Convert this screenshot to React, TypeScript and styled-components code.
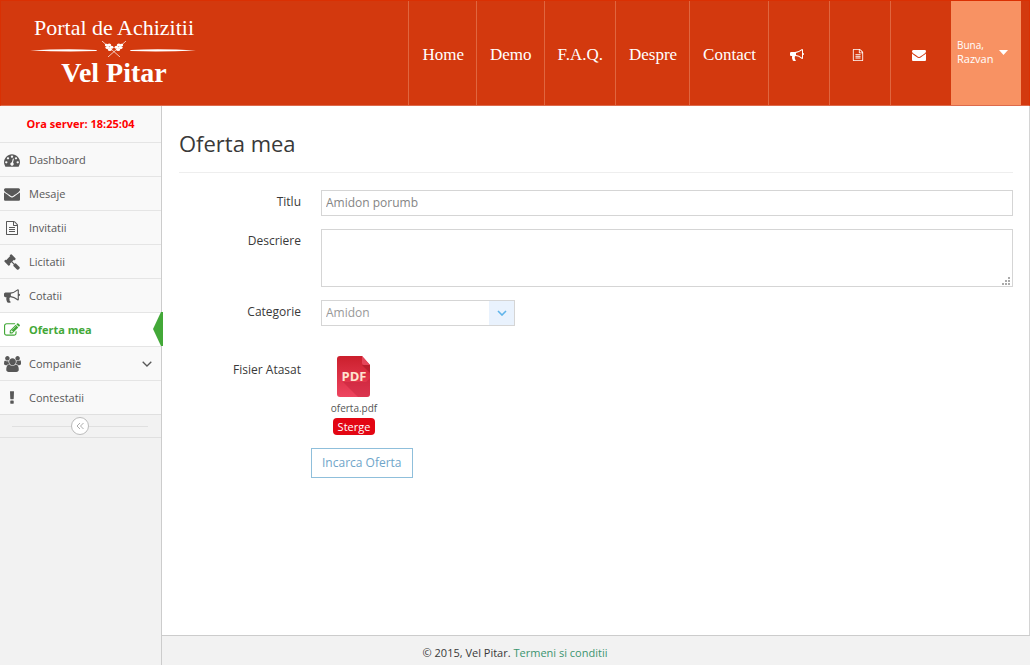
import React from "react";
import styled, { createGlobalStyle, css } from "styled-components";

const GlobalStyle = createGlobalStyle`
  * { box-sizing: border-box; }
  body {
    margin: 0;
    background: #fff;
    color: #393939;
    font-family: "Open Sans", "Noto Sans", sans-serif;
    font-size: 12px;
    line-height: 20px;
  }
  button, input, select, textarea { font: inherit; margin: 0; }
  a { text-decoration: none; }
`;

const icons = {
  envelope: {
    width: 1792,
    d: "M1792 710v794q0 66-47 113t-113 47h-1472q-66 0-113-47t-47-113v-794q44 49 101 87 362 246 497 345 57 42 92.5 65.5t94.5 48 110 24.5h2q51 0 110-24.5t94.5-48 92.5-65.5q170-123 498-345 57-39 100-87zm0-294q0 79-49 151t-122 123q-376 261-468 325-10 7-42.5 31t-54 38.5-52 32.5-57.5 27-50 9h-2q-23 0-50-9t-57.5-27-52-32.5-54-38.5-42.5-31q-91-64-262-182.5t-205-142.5q-62-42-117-115.5t-55-136.5q0-78 41.5-130t118.5-52h1472q65 0 112.5 47t47.5 113z",
  },
  file: {
    width: 1792,
    d: "M1596 380q28 28 48 76t20 88v1152q0 40-28 68t-68 28h-1344q-40 0-68-28t-28-68v-1600q0-40 28-68t68-28h896q40 0 88 20t76 48zm-444-244v376h376q-10-29-22-41l-313-313q-12-12-41-22zm384 1528v-1024h-416q-40 0-68-28t-28-68v-416h-768v1536h1280zm-1024-864q0-14 9-23t23-9h704q14 0 23 9t9 23v64q0 14-9 23t-23 9h-704q-14 0-23-9t-9-23v-64zm736 224q14 0 23 9t9 23v64q0 14-9 23t-23 9h-704q-14 0-23-9t-9-23v-64q0-14 9-23t23-9h704zm0 256q14 0 23 9t9 23v64q0 14-9 23t-23 9h-704q-14 0-23-9t-9-23v-64q0-14 9-23t23-9h704z",
  },
  bullhorn: {
    width: 1792,
    d: "M1664 640q53 0 90.5 37.5t37.5 90.5-37.5 90.5-90.5 37.5v384q0 52-38 90t-90 38q-417-347-812-380-58 19-91 66t-31 100.5 40 92.5q-20 33-23 65.5t6 58 33.5 55 48 50 61.5 50.5q-29 58-111.5 83t-168.5 11.5-132-55.5q-7-23-29.5-87.5t-32-94.5-23-89-15-101 3.5-98.5 22-110.5h-122q-66 0-113-47t-47-113v-192q0-66 47-113t113-47h480q435 0 896-384 52 0 90 38t38 90v384zm-128 604v-954q-394 302-768 343v270q377 42 768 341z",
  },
  gauge: {
    width: 1792,
    d: "M384 1152q0-53-37.5-90.5t-90.5-37.5-90.5 37.5-37.5 90.5 37.5 90.5 90.5 37.5 90.5-37.5 37.5-90.5zm192-448q0-53-37.5-90.5t-90.5-37.5-90.5 37.5-37.5 90.5 37.5 90.5 90.5 37.5 90.5-37.5 37.5-90.5zm428 481l101-382q6-26-7.5-48.5t-38.5-29.5-48 6.5-30 39.5l-101 382q-60 5-107 43.5t-63 98.5q-20 77 20 146t117 89 146-20 89-117q16-60-6-117t-72-91zm660-33q0-53-37.5-90.5t-90.5-37.5-90.5 37.5-37.5 90.5 37.5 90.5 90.5 37.5 90.5-37.5 37.5-90.5zm-640-640q0-53-37.5-90.5t-90.5-37.5-90.5 37.5-37.5 90.5 37.5 90.5 90.5 37.5 90.5-37.5 37.5-90.5zm448 192q0-53-37.5-90.5t-90.5-37.5-90.5 37.5-37.5 90.5 37.5 90.5 90.5 37.5 90.5-37.5 37.5-90.5zm320 448q0 261-141 483-19 29-54 29h-1402q-35 0-54-29-141-221-141-483 0-182 71-348t191-286 286-191 348-71 348 71 286 191 191 286 71 348z",
  },
  gavel: {
    width: 1792,
    d: "M1771 1536q0 53-37 90l-107 108q-39 37-91 37-53 0-90-37l-363-364q-38-36-38-90 0-53 43-96l-256-256-126 126q-14 14-34 14t-34-14q2 2 12.5 12t12.5 13 10 11.5 10 13.5 6 13.5 5.5 16.5 1.5 18q0 38-28 68-3 3-16.5 18t-19 20.5-18.5 16.5-22 15.5-22 9-26 4.5q-40 0-68-28l-408-408q-28-28-28-68 0-13 4.5-26t9-22 15.5-22 16.5-18.5 20.5-19 18-16.5q30-28 68-28 10 0 18 1.5t16.5 5.5 13.5 6 13.5 10 11.5 10 13 12.5 12 12.5q-14-14-14-34t14-34l348-348q14-14 34-14t34 14q-2-2-12.5-12t-12.5-13-10-11.5-10-13.5-6-13.5-5.5-16.5-1.5-18q0-38 28-68 3-3 16.5-18t19-20.5 18.5-16.5 22-15.5 22-9 26-4.5q40 0 68 28l408 408q28 28 28 68 0 13-4.5 26t-9 22-15.5 22-16.5 18.5-20.5 19-18 16.5q-30 28-68 28-10 0-18-1.5t-16.5-5.5-13.5-6-13.5-10-11.5-10-13-12.5-12-12.5q14 14 14 34t-14 34l-126 126 256 256q43-43 96-43 52 0 91 37l363 363q37 39 37 91z",
  },
  edit: {
    width: 1792,
    d: "M888 1184l116-116-152-152-116 116v56h96v96h56zm440-720q-16-16-33 1l-350 350q-17 17-1 33t33-1l350-350q17-17 1-33zm80 594v190q0 119-84.5 203.5t-203.5 84.5h-832q-119 0-203.5-84.5t-84.5-203.5v-832q0-119 84.5-203.5t203.5-84.5h832q63 0 117 25 15 7 18 23 3 17-9 29l-49 49q-14 14-32 8-23-6-45-6h-832q-66 0-113 47t-47 113v832q0 66 47 113t113 47h832q66 0 113-47t47-113v-126q0-13 9-22l64-64q15-15 35-7t20 29zm-96-738l288 288-672 672h-288v-288zm444 132l-92 92-288-288 92-92q28-28 68-28t68 28l152 152q28 28 28 68t-28 68z",
  },
  users: {
    width: 1920,
    d: "M593 896q-162 5-265 128h-134q-82 0-138-40.5t-56-118.5q0-353 124-353 6 0 43.5 21t97.5 42.5 119 21.5q67 0 133-23-5 37-5 66 0 159 93 293zm1071 637q0 120-73 189.5t-194 69.5h-874q-121 0-194-69.5t-73-189.5q0-53 3.5-103.5t14-109 26.5-108.5 43-97.5 62-81 85.5-53.5 111.5-20q10 0 43 21.5t73 48 107 48 135 21.5 135-21.5 107-48 73-48 43-21.5q61 0 111.5 20t85.5 53.5 62 81 43 97.5 26.5 108.5 14 109 3.5 103.5zm-1024-1277q0 106-75 181t-181 75-181-75-75-181 75-181 181-75 181 75 75 181zm704 384q0 159-112.5 271.5t-271.5 112.5-271.5-112.5-112.5-271.5 112.5-271.5 271.5-112.5 271.5 112.5 112.5 271.5zm576 225q0 78-56 118.5t-138 40.5h-134q-103-123-265-128 93-134 93-293 0-29-5-66 66 23 133 23 59 0 119-21.5t97.5-42.5 43.5-21q124 0 124 353zm-128-609q0 106-75 181t-181 75-181-75-75-181 75-181 181-75 181 75 75 181z",
  },
  exclamation: {
    width: 1792,
    d: "M1088 1248v224q0 26-19 45t-45 19h-256q-26 0-45-19t-19-45v-224q0-26 19-45t45-19h256q26 0 45 19t19 45zm30-1056l-28 768q-1 26-20.5 45t-45.5 19h-256q-26 0-45.5-19t-20.5-45l-28-768q-1-26 17.5-45t44.5-19h320q26 0 44.5 19t17.5 45z",
  },
};

type IconName = keyof typeof icons;

function Icon({ name, size }: { name: IconName; size: number }) {
  const icon = icons[name];
  return (
    <svg
      height={size}
      width={Math.round((size * icon.width) / 1792)}
      viewBox={`0 0 ${icon.width} 1792`}
      fill="currentColor"
      aria-hidden="true"
    >
      <path d={icon.d} />
    </svg>
  );
}

const Page = styled.div`
  display: flex;
  flex-direction: column;
  min-height: 100vh;
`;

const Header = styled.header`
  display: flex;
  justify-content: space-between;
  height: 106px;
  padding-right: 8px;
  background: #d3390e;
  border: 1px solid #da3003;
  border-bottom-color: #dd6a4b;
`;

const Brand = styled.a`
  display: flex;
  flex-direction: column;
  align-items: center;
  width: 168px;
  margin-left: 29px;
  padding-top: 14px;
  color: #fff;
  font-family: "Liberation Serif", serif;
  white-space: nowrap;
`;

const BrandTop = styled.span`
  font-size: 22px;
  line-height: 26px;
`;

const BrandName = styled.span`
  font-size: 28px;
  font-weight: 700;
  line-height: 32px;
`;

const BrandRule = styled.svg`
  display: block;
`;

const TopNav = styled.nav`
  display: flex;
`;

const navCell = css`
  display: flex;
  align-items: center;
  justify-content: center;
  border-left: 1px solid #e0663f;
  color: #fff;
`;

const NavLink = styled.a`
  ${navCell}
  padding: 4px 12px 0 13px;
  font-family: "Liberation Serif", serif;
  font-size: 17px;
`;

const NavIcon = styled.a`
  ${navCell}
  width: 61px;
  padding: 4px 4px 0 0;
`;

const UserButton = styled.button`
  display: flex;
  align-items: center;
  gap: 6px;
  width: 70px;
  padding: 0 0 2px 6px;
  border: 0;
  background: #f89263;
  color: #fff;
  font-size: 11px;
  line-height: 13px;
  text-align: left;
`;

const Greeting = styled.small`
  display: block;
  font-size: 10px;
`;

const Body = styled.div`
  display: flex;
  flex: 1;
`;

const Sidebar = styled.aside`
  flex: none;
  width: 162px;
  background: #f2f2f2;
  border-right: 1px solid #ccc;
`;

const ServerTime = styled.div`
  padding: 8px 0;
  background: #f9f9f9;
  color: #f00;
  font-size: 11px;
  font-weight: 700;
  text-align: center;
`;

const Menu = styled.ul`
  margin: 0;
  padding: 0;
  list-style: none;
`;

const MenuLink = styled.a<{ $active?: boolean }>`
  position: relative;
  display: grid;
  grid-template-columns: 24px 1fr auto;
  align-items: center;
  gap: 5px;
  height: 34px;
  padding-right: 9px;
  border-top: 1px solid #e5e5e5;
  background: ${(p) => (p.$active ? "#fff" : "#f9f9f9")};
  color: ${(p) => (p.$active ? "#43a838" : "#585858")};
  font-size: 11px;
  font-weight: ${(p) => (p.$active ? 700 : 400)};
`;

const MenuIcon = styled.span`
  display: flex;
  justify-content: center;
`;

const ActiveMark = styled.svg`
  position: absolute;
  top: -1px;
  right: -2px;
`;

const CollapseBar = styled.div`
  display: flex;
  align-items: center;
  height: 24px;
  padding: 0 13px 0 12px;
  border-top: 1px solid #e0e0e0;
  border-bottom: 1px solid #e0e0e0;

  &::before,
  &::after {
    content: "";
    flex: 1;
    border-top: 1px solid #e0e0e0;
  }
`;

const CollapseButton = styled.button`
  display: flex;
  align-items: center;
  justify-content: center;
  width: 18px;
  height: 18px;
  padding: 0;
  border: 1px solid #bbb;
  border-radius: 50%;
  background: #fff;
  color: #aaa;
`;

const Content = styled.div`
  display: flex;
  flex: 1;
  flex-direction: column;
  min-width: 0;
`;

const Main = styled.main`
  flex: 1;
  padding: 22px 16px 0 17px;
  border-right: 1px solid #d4d4d4;
`;

const Title = styled.h1`
  margin: 0 0 17px;
  padding-bottom: 14px;
  border-bottom: 1px solid #eee;
  color: #393939;
  font-size: 22px;
  font-weight: 400;
  line-height: 30px;
`;

const Form = styled.form`
  display: flex;
  flex-direction: column;
  gap: 13px;
`;

const Row = styled.div`
  display: grid;
  grid-template-columns: 122px 1fr;
  gap: 20px;
`;

const Label = styled.label`
  padding-top: 2px;
  text-align: right;
`;

const field = css`
  display: block;
  width: 100%;
  border: 1px solid #d5d5d5;
  border-radius: 0;
  outline: none;
  background: #fff;
  color: #858585;
`;

const TextInput = styled.input`
  ${field}
  height: 26px;
  padding: 0 4px 2px;
`;

const AreaWrap = styled.div`
  position: relative;
`;

const TextArea = styled.textarea`
  ${field}
  height: 58px;
  padding: 4px;
  resize: none;
`;

const Grip = styled.svg`
  position: absolute;
  right: 3px;
  bottom: 2px;
  pointer-events: none;
`;

const SelectWrap = styled.div`
  position: relative;
  width: 194px;
`;

const Select = styled.select`
  ${field}
  height: 26px;
  padding: 0 30px 0 4px;
  appearance: none;
  color: #999;
`;

const SelectArrow = styled.span`
  position: absolute;
  top: 1px;
  right: 1px;
  bottom: 1px;
  display: flex;
  align-items: center;
  justify-content: center;
  width: 25px;
  background: #e9f2fd;
  pointer-events: none;
`;

const AttachmentRow = styled(Row)`
  margin-top: 17px;
`;

const AttachmentLabel = styled.span`
  padding-top: 4px;
  text-align: right;
`;

const Attachment = styled.div`
  display: flex;
  flex-direction: column;
  align-items: center;
  width: 66px;
`;

const FileName = styled.span`
  margin: 4px 0 3px;
  color: #555;
  font-size: 10px;
  line-height: 14px;
`;

const DeleteButton = styled.button`
  height: 17px;
  padding: 0 5px;
  border: 0;
  border-radius: 4px;
  background: #e30613;
  color: #fff;
  font-size: 11px;
  line-height: 17px;
`;

const UploadButton = styled.button`
  align-self: flex-start;
  height: 30px;
  margin-left: 132px;
  padding: 0 10px;
  border: 1px solid #8fbfdb;
  background: #fff;
  color: #6fa5c9;
`;

const Footer = styled.footer`
  padding: 7px 162px 2px 0;
  border-top: 1px solid #ccc;
  background: #f2f2f2;
  font-size: 11px;
  text-align: center;
`;

const TermsLink = styled.a`
  color: #3b9470;
`;

const navLinks = ["Home", "Demo", "F.A.Q.", "Despre", "Contact"];

const navIcons: { name: IconName; label: string }[] = [
  { name: "bullhorn", label: "Cotatii" },
  { name: "file", label: "Invitatii" },
  { name: "envelope", label: "Mesaje" },
];

const menuItems: { icon: IconName; label: string; active?: boolean; expandable?: boolean }[] = [
  { icon: "gauge", label: "Dashboard" },
  { icon: "envelope", label: "Mesaje" },
  { icon: "file", label: "Invitatii" },
  { icon: "gavel", label: "Licitatii" },
  { icon: "bullhorn", label: "Cotatii" },
  { icon: "edit", label: "Oferta mea", active: true },
  { icon: "users", label: "Companie", expandable: true },
  { icon: "exclamation", label: "Contestatii" },
];

function WheatStalk() {
  return (
    <g>
      <path d="M-6 8L12 -8" stroke="#fff" strokeOpacity="0.800" strokeWidth="0.900" />
      <g fill="#fff">
        <ellipse cx="2.500" cy="-1.800" rx="2" ry="1.500" />
        <ellipse cx="4.800" cy="-4" rx="2" ry="1.500" />
        <ellipse cx="4.200" cy="0.400" rx="2" ry="1.500" />
        <ellipse cx="6.600" cy="-1.600" rx="2" ry="1.500" />
        <ellipse cx="7.600" cy="-4" rx="1.600" ry="1.300" />
      </g>
    </g>
  );
}

function BrandDivider() {
  return (
    <BrandRule width="168" height="16" viewBox="0 0 168 16" fill="none" aria-hidden="true">
      <path d="M0 9.500Q35 7.500 66 9Q68 9.500 66 10Q35 11 0 9.500Z" fill="#fff" />
      <path d="M166 9.500Q131 7.500 101 9Q99 9.500 101 10Q131 11 166 9.500Z" fill="#fff" />
      <g transform="translate(84 8)">
        <WheatStalk />
        <g transform="scale(-1 1)"><WheatStalk /></g>
      </g>
    </BrandRule>
  );
}

function PdfIcon() {
  return (
    <svg width="34" height="41" viewBox="0 0 34 41" role="img" aria-label="PDF">
      <defs>
        <linearGradient id="sheet" x1="0" y1="0" x2="0" y2="1">
          <stop offset="0" stopColor="#cb1f2c" />
          <stop offset="1" stopColor="#ee4560" />
        </linearGradient>
      </defs>
      <path d="M3 0H25L33 9V38Q33 41 30 41H3Q0 41 0 38V3Q0 0 3 0Z" fill="url(#sheet)" />
      <path d="M6 26H29L33 22V38Q33 41 30 41H21Z" fill="#b81630" opacity="0.350" />
      <path d="M25 9L33 17V9Z" fill="#9d1420" opacity="0.500" />
      <path d="M25 0L33 9H27Q25 9 25 7Z" fill="#e5465a" />
      <text
        x="17"
        y="25"
        textAnchor="middle"
        fontFamily="Open Sans, sans-serif"
        fontSize="13"
        fontWeight="700"
        fill="#ffe3cf"
      >
        PDF
      </text>
    </svg>
  );
}

export default function App() {
  return (
    <Page>
      <GlobalStyle />
      <Header>
        <Brand href="#">
          <BrandTop>Portal de Achizitii</BrandTop>
          <BrandDivider />
          <BrandName>Vel Pitar</BrandName>
        </Brand>
        <TopNav>
          {navLinks.map((label) => (
            <NavLink key={label} href="#">{label}</NavLink>
          ))}
          {navIcons.map(({ name, label }) => (
            <NavIcon key={name} href="#" aria-label={label}>
              <Icon name={name} size={name === "file" ? 12 : 14} />
            </NavIcon>
          ))}
          <UserButton type="button">
            <span>
              <Greeting>Buna,</Greeting>
              Razvan
            </span>
            <svg width="9" height="5" viewBox="0 0 9 5" fill="currentColor" aria-hidden="true">
              <path d="M0 0H9L4.500 5Z" />
            </svg>
          </UserButton>
        </TopNav>
      </Header>
      <Body>
        <Sidebar>
          <ServerTime>Ora server: 18:25:04</ServerTime>
          <Menu>
            {menuItems.map((item) => (
              <li key={item.label}>
                <MenuLink href="#" $active={item.active}>
                  <MenuIcon>
                    <Icon name={item.icon} size={item.icon === "file" ? 14 : 16} />
                  </MenuIcon>
                  {item.label}
                  {item.expandable && (
                    <svg width="10" height="6" viewBox="0 0 10 6" fill="none" stroke="currentColor" strokeWidth="1.300" aria-hidden="true">
                      <path d="M0.700 0.700L5 5L9.300 0.700" />
                    </svg>
                  )}
                  {item.active && (
                    <ActiveMark width="10" height="34" viewBox="0 0 10 34" fill="#43a838" aria-hidden="true">
                      <path d="M10 0V34H8L0 17L8 0Z" />
                    </ActiveMark>
                  )}
                </MenuLink>
              </li>
            ))}
          </Menu>
          <CollapseBar>
            <CollapseButton type="button" aria-label="Restrange meniul">
              <svg width="8" height="8" viewBox="0 0 8 8" fill="none" stroke="currentColor" aria-hidden="true">
                <path d="M4 1L1 4L4 7M7.500 1L4.500 4L7.500 7" />
              </svg>
            </CollapseButton>
          </CollapseBar>
        </Sidebar>
        <Content>
          <Main>
            <Title>Oferta mea</Title>
            <Form>
              <Row>
                <Label htmlFor="titlu">Titlu</Label>
                <TextInput id="titlu" defaultValue="Amidon porumb" />
              </Row>
              <Row>
                <Label htmlFor="descriere">Descriere</Label>
                <AreaWrap>
                  <TextArea id="descriere" />
                  <Grip width="8" height="8" viewBox="0 0 8 8" fill="#aaa" aria-hidden="true">
                    <path d="M6 0h2v2h-2zM3 3h2v2h-2zM6 3h2v2h-2zM0 6h2v2h-2zM3 6h2v2h-2zM6 6h2v2h-2z" />
                  </Grip>
                </AreaWrap>
              </Row>
              <Row>
                <Label htmlFor="categorie">Categorie</Label>
                <SelectWrap>
                  <Select id="categorie" defaultValue="Amidon">
                    <option>Amidon</option>
                  </Select>
                  <SelectArrow>
                    <svg width="10" height="6" viewBox="0 0 10 6" fill="none" stroke="#5fb4ea" strokeWidth="1.600" aria-hidden="true">
                      <path d="M1 1L5 5L9 1" />
                    </svg>
                  </SelectArrow>
                </SelectWrap>
              </Row>
              <AttachmentRow>
                <AttachmentLabel>Fisier Atasat</AttachmentLabel>
                <Attachment>
                  <PdfIcon />
                  <FileName>oferta.pdf</FileName>
                  <DeleteButton type="button">Sterge</DeleteButton>
                </Attachment>
              </AttachmentRow>
              <UploadButton type="button">Incarca Oferta</UploadButton>
            </Form>
          </Main>
          <Footer>
            © 2015, Vel Pitar. <TermsLink href="#">Termeni si conditii</TermsLink>
          </Footer>
        </Content>
      </Body>
    </Page>
  );
}
